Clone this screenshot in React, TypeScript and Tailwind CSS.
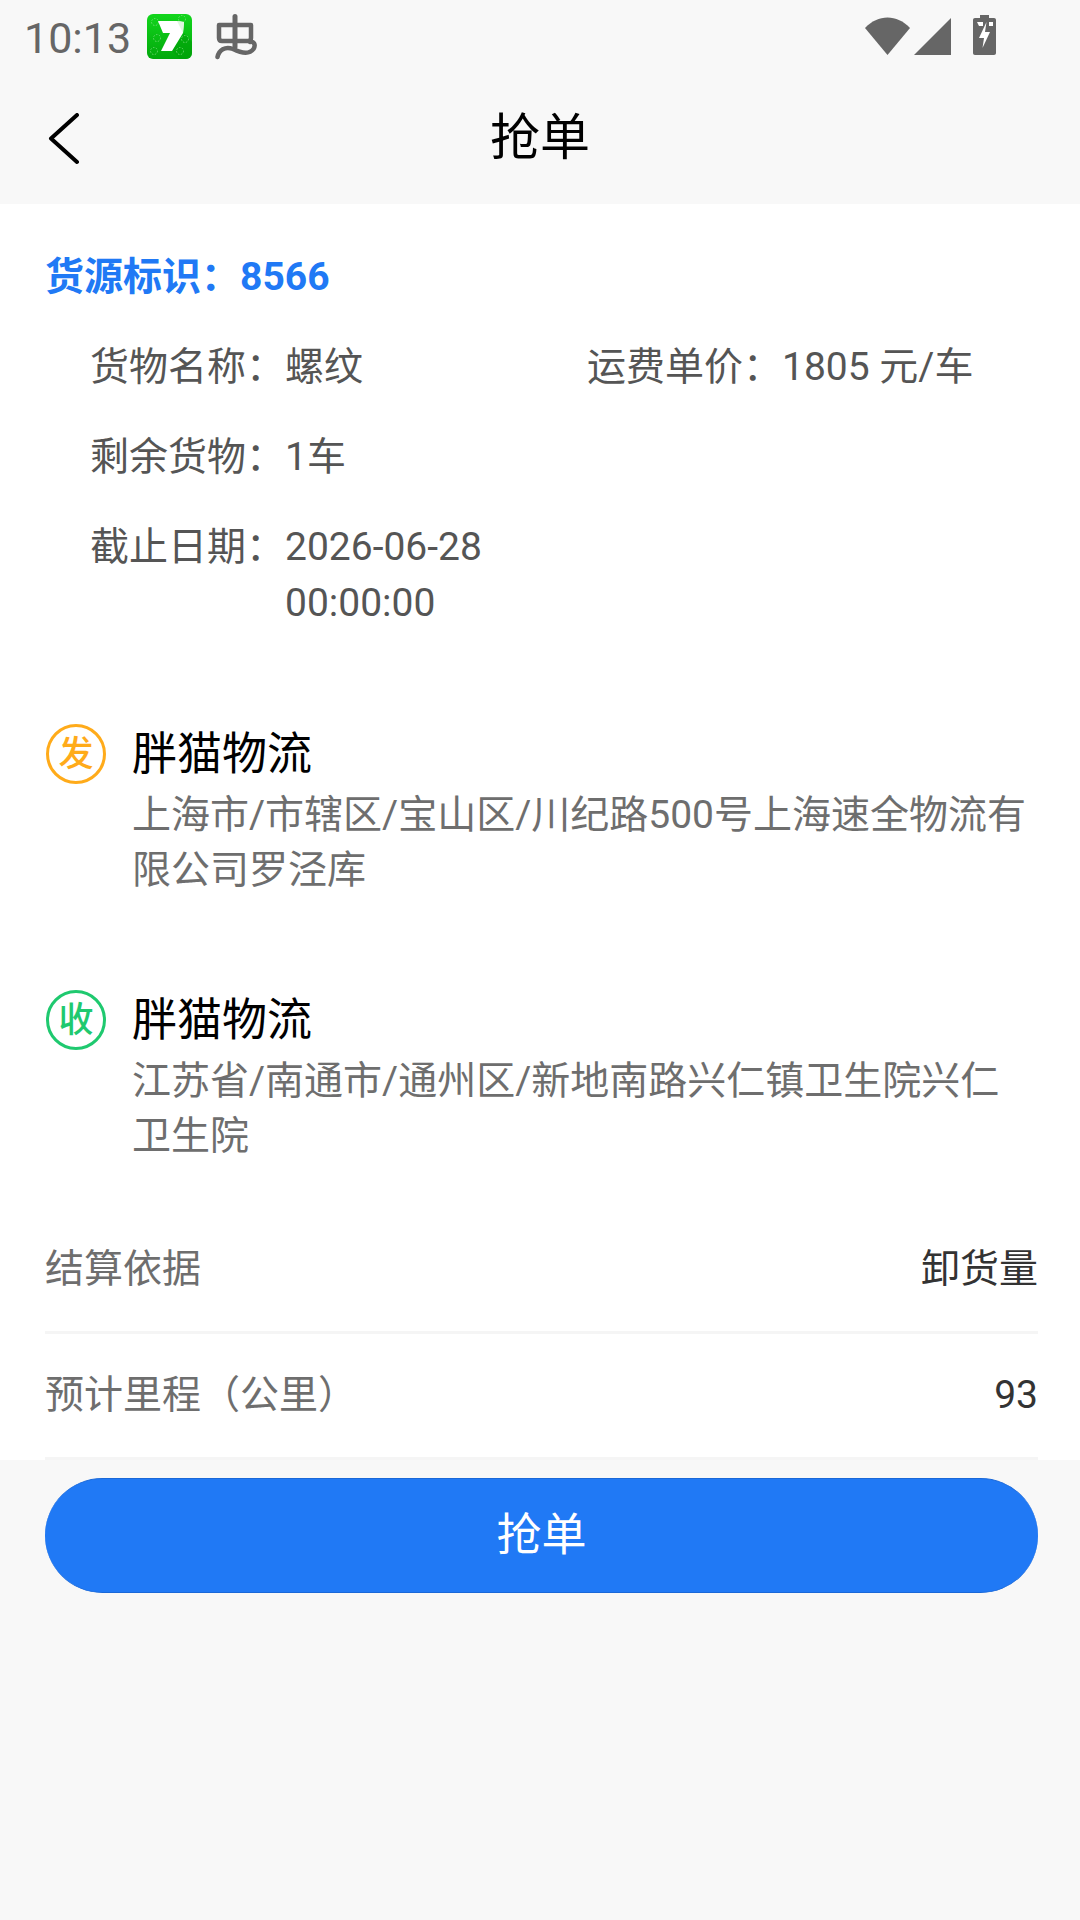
const font = { fontFamily: '"Roboto", "Noto Sans CJK SC", sans-serif' };

const SevenIcon = () => (
  <svg width="45" height="45" viewBox="0 0 45 45">
    <defs>
      <linearGradient id="g7" x1="0" y1="0" x2="0" y2="1">
        <stop offset="0" stopColor="#12d61c" />
        <stop offset="1" stopColor="#02a80c" />
      </linearGradient>
    </defs>
    <rect width="45" height="45" rx="6" fill="url(#g7)" />
    <path d="M25 37L37 19L45 28V39C45 42.500 42.500 45 39 45H33Z" fill="#00a008" opacity="0.6" />
    <g fill="none" stroke="#8fe08f" strokeWidth="0.7" strokeDasharray="1.5 1.5">
      <circle cx="8" cy="8" r="3.500" />
      <circle cx="35" cy="5" r="3.500" />
      <circle cx="10" cy="24" r="3.500" />
      <circle cx="38" cy="25" r="3.500" />
      <circle cx="7" cy="37" r="3.500" />
      <circle cx="33" cy="37" r="3.500" />
    </g>
    <path d="M11 7H30L37 8L36 19L25 37H14L23 19H16Z" fill="#fff" />
    <path d="M30 7L37 8L36 19Z" fill="#dff7df" />
  </svg>
);

const BugIcon = () => (
  <svg width="42" height="46" viewBox="0 0 42 46" fill="none" stroke="#666" strokeWidth="4.500" strokeLinecap="round" strokeLinejoin="round">
    <path d="M20 2.500V33" strokeWidth="5" />
    <path d="M4 11H36V24C36 26 35 27 33 27H7C5 27 4 26 4 24Z" />
    <path d="M2.500 43C4 36 10 32 18 35C26 39 34 41 38.500 35C41 31 39 27 35 28" />
  </svg>
);

const Row = ({ label, value }: { label: string; value: string }) => (
  <div className="flex h-[126px] items-center justify-between border-b-[3px] border-[#f5f5f5]">
    <span className="text-[#6e6e6e]">{label}</span>
    <span className="text-[#333]">{value}</span>
  </div>
);

const Info = ({ label, value }: { label: string; value: React.ReactNode }) => (
  <div className="flex leading-[56px]">
    <span className="w-[195px] shrink-0">{label}</span>
    <span>{value}</span>
  </div>
);

const Address = ({
  badge,
  color,
  name,
  address,
}: {
  badge: string;
  color: string;
  name: string;
  address: React.ReactNode;
}) => (
  <div className="ml-[1px] flex">
    <div
      className="mt-[1px] flex h-[60px] w-[60px] shrink-0 items-center justify-center rounded-full border-[3px] text-[35px] font-medium leading-none"
      style={{ borderColor: color, color }}
    >
      {badge}
    </div>
    <div className="ml-[26px]">
      <div className="text-[45px] leading-[63px] text-black">{name}</div>
      <div className="mt-[2px] text-[39px] leading-[55px] text-[#6e6e6e]">{address}</div>
    </div>
  </div>
);

export default function App() {
  return (
    <div className="flex h-[1920px] w-[1080px] flex-col overflow-hidden bg-[#f8f8f8]" style={font}>
      <div className="flex h-[76px] items-center pl-[24px] pr-[84px]">
        <span className="text-[43px] leading-none text-[#666]">10:13</span>
        <span className="mb-[3px] ml-[16px]"><SevenIcon /></span>
        <span className="mb-[2px] ml-[23px]"><BugIcon /></span>
        <div className="mb-[6px] ml-auto flex items-end gap-[4px]">
          <svg width="45" height="38" viewBox="0 0 45 38">
            <path d="M0 11C13 -3 32 -3 45 11L22.500 38Z" fill="#666" />
          </svg>
          <svg width="37" height="38" viewBox="0 0 37 38">
            <path d="M0 38L37 1V38Z" fill="#666" />
          </svg>
          <svg className="ml-[18px]" width="23" height="40" viewBox="0 0 23 40">
            <path d="M7 0H16V3H21C22.200 3 23 3.800 23 5V38C23 39.200 22.200 40 21 40H2C0.800 40 0 39.200 0 38V5C0 3.800 0.800 3 2 3H7Z" fill="#666" />
            <path d="M4 7H10V11H6ZM16 7H20V11H16Z" fill="#fff" />
            <path d="M13.500 7L6 23H11L9.500 33L17 17H12Z" fill="#fff" />
          </svg>
        </div>
      </div>

      <div className="relative flex h-[128px] items-center justify-center">
        <svg className="absolute left-[48px] top-[37px]" width="32" height="52" viewBox="0 0 32 52" fill="none" stroke="#000" strokeWidth="4" strokeLinecap="round" strokeLinejoin="round">
          <path d="M29 2L3 25.500L29 49" />
        </svg>
        <span className="mb-[5px] text-[50px] leading-none text-black">抢单</span>
      </div>

      <div className="h-[1256px] bg-white pl-[45px] pr-[42px]">
        <div className="pt-[50px] text-[39px] font-bold leading-[46px] text-[#2079f5]">货源标识：8566</div>

        <div className="mt-[39px] pl-[45px] text-[39px] text-[#555]">
          <div className="grid grid-cols-[497px_1fr]">
            <Info label="货物名称：" value="螺纹" />
            <Info label="运费单价：" value="1805 元/车" />
          </div>
          <div className="mt-[34px]">
            <Info label="剩余货物：" value="1车" />
          </div>
          <div className="mt-[34px]">
            <Info
              label="截止日期："
              value={
                <>
                  2026-06-28
                  <br />
                  00:00:00
                </>
              }
            />
          </div>
        </div>

        <div className="mt-[92px]">
          <Address
            badge="发"
            color="#ffab1a"
            name="胖猫物流"
            address={
              <>
                上海市/市辖区/宝山区/川纪路500号上海速全物流有
                <br />
                限公司罗泾库
              </>
            }
          />
        </div>
        <div className="mt-[91px]">
          <Address
            badge="收"
            color="#1fc96f"
            name="胖猫物流"
            address={
              <>
                江苏省/南通市/通州区/新地南路兴仁镇卫生院兴仁
                <br />
                卫生院
              </>
            }
          />
        </div>

        <div className="mt-[44px] text-[39px]">
          <Row label="结算依据" value="卸货量" />
          <Row label="预计里程（公里）" value="93" />
        </div>
      </div>

      <div className="ml-[45px] mr-[42px] mt-[18px] flex h-[115px] items-center justify-center rounded-full border-y border-[#1a68d8] bg-[#2079f5] text-[45px] text-white">
        抢单
      </div>
    </div>
  );
}
